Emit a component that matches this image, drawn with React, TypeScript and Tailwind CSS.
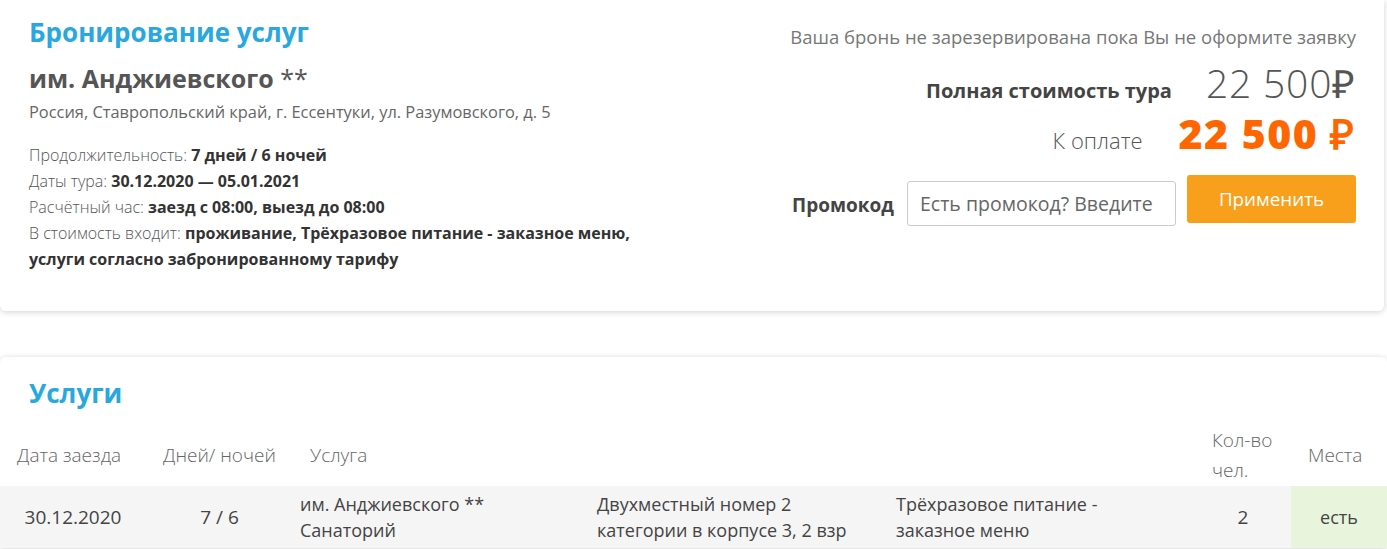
import React from 'react';

const font = { fontFamily: '"Open Sans", Lato, Arial, sans-serif' };

const InfoLine: React.FC<{ label: string; value: string }> = ({ label, value }) => (
  <div>
    <span className="font-light text-[#555]">{label} </span>
    <span className="font-bold text-[#333]">{value}</span>
  </div>
);

const BookingCard: React.FC = () => (
  <div className="flex justify-between rounded-b-md bg-white pl-[29px] pr-[28px] pt-[15px] h-[311px] mr-[3px] shadow-[0_1px_6px_rgba(0,0,0,0.18)]">
    <div>
      <h1 className="text-[26px] font-bold text-[#29a7df] leading-[34px]">Бронирование услуг</h1>
      <h2 className="mt-[13px] text-[25px] font-bold text-[#555] leading-[32px]">
        им. Анджиевского <span className="font-normal">**</span>
      </h2>
      <p className="mt-[8px] text-[16.4px] text-[#666] leading-[20px]">
        Россия, Ставропольский край, г. Ессентуки, ул. Разумовского, д. 5
      </p>
      <div className="mt-[20px] text-[16px] leading-[26px]">
        <InfoLine label="Продолжительность:" value="7 дней / 6 ночей" />
        <InfoLine label="Даты тура:" value="30.12.2020 — 05.01.2021" />
        <InfoLine label="Расчётный час:" value="заезд с 08:00, выезд до 08:00" />
        <div>
          <span className="font-light text-[#555]">В стоимость входит: </span>
          <span className="font-bold text-[#333]">проживание, Трёхразовое питание - заказное меню,</span>
          <br />
          <span className="font-bold text-[#333]">услуги согласно забронированному тарифу</span>
        </div>
      </div>
    </div>

    <div className="flex flex-col items-end pt-[10px]">
      <p className="text-[18.5px] text-[#777] leading-[24px]">
        Ваша бронь не зарезервирована пока Вы не оформите заявку
      </p>
      <div className="mt-[12px] flex items-baseline">
        <span className="text-[20px] font-bold text-[#444]">Полная стоимость тура</span>
        <span className="ml-[34px] text-[39px] font-light text-[#555] leading-[44px] tracking-[0.8px]">22 500₽</span>
      </div>
      <div className="mt-[4px] flex items-baseline">
        <span className="text-[22px] font-light text-[#555]">К оплате</span>
        <span className="ml-[36px] text-[41px] font-extrabold text-[#ff6600] leading-[46px] tracking-[1.5px]">22 500 ₽</span>
      </div>
      <div className="mt-[18px] flex items-start">
        <span className="mt-[16px] text-[19px] font-bold text-[#444]">Промокод</span>
        <input
          className="ml-[13px] mt-[6px] h-[45px] w-[269px] rounded-[3px] border border-[#ccc] px-[12px] text-[19.5px] text-[#555] placeholder:text-[#666] outline-none"
          placeholder="Есть промокод? Введите"
        />
        <button className="ml-[11px] h-[48px] w-[169px] rounded-[3px] bg-[#f8a01c] text-[18.8px] text-white">
          Применить
        </button>
      </div>
    </div>
  </div>
);

const ServicesCard: React.FC = () => (
  <div className="mt-[46px] rounded-t-md bg-white shadow-[0_1px_6px_rgba(0,0,0,0.18)]">
    <h2 className="pl-[29px] pt-[19px] text-[26px] font-bold text-[#29a7df] leading-[34px]">Услуги</h2>
    <table className="mt-[14px] w-full table-fixed border-collapse">
      <colgroup>
        <col className="w-[146px]" />
        <col className="w-[147px]" />
        <col className="w-[297px]" />
        <col className="w-[299px]" />
        <col className="w-[306px]" />
        <col className="w-[96px]" />
        <col />
      </colgroup>
      <thead>
        <tr className="h-[62px] text-left text-[19px] font-light text-[#666] leading-[30px]">
          <th className="pl-[17px] font-light">Дата заезда</th>
          <th className="pl-[17px] font-light">Дней/ ночей</th>
          <th className="pl-[17px] font-light">Услуга</th>
          <th />
          <th />
          <th className="pl-[17px] font-light whitespace-nowrap">
            Кол-во
            <br />
            чел.
          </th>
          <th className="pl-[17px] font-light">Места</th>
        </tr>
      </thead>
      <tbody>
        <tr className="h-[62px] bg-[#f5f5f5] text-[18px] text-[#444] leading-[26px]">
          <td className="text-center text-[19px]">30.12.2020</td>
          <td className="text-center text-[19px]">7 / 6</td>
          <td className="pl-[7px]">
            им. Анджиевского **
            <br />
            Санаторий
          </td>
          <td className="pl-[7px]">
            Двухместный номер 2
            <br />
            категории в корпусе 3, 2 взр
          </td>
          <td className="pl-[7px]">
            Трёхразовое питание -
            <br />
            заказное меню
          </td>
          <td className="text-center text-[19px]">2</td>
          <td className="bg-[#e8f5dc] text-center">есть</td>
        </tr>
      </tbody>
    </table>
  </div>
);

export default function App() {
  return (
    <div className="min-h-screen bg-white" style={font}>
      <BookingCard />
      <ServicesCard />
    </div>
  );
}
